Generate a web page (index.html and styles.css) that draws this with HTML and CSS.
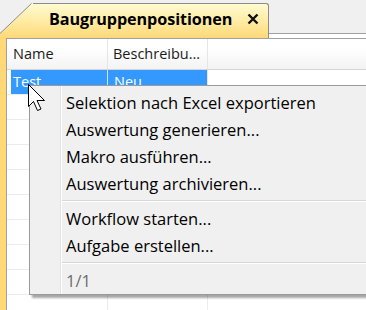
FILE: index.html
```html
<!DOCTYPE html>
<html lang="de">
<head>
<meta charset="utf-8">
<link rel="stylesheet" href="styles.css">
</head>
<body>
<div class="window">
  <div class="tabstrip">
    <svg class="tab-slant" width="33" height="35" viewBox="0 0 33 35">
      <defs>
        <linearGradient id="tg" x1="0" y1="0" x2="0" y2="1">
          <stop offset="0" stop-color="#fffbd2"/>
          <stop offset="0.55" stop-color="#ffeaa0"/>
          <stop offset="1" stop-color="#ffd878"/>
        </linearGradient>
      </defs>
      <polygon points="0,31 32,0 33,0 33,35 0,35" fill="url(#tg)"/>
      <line x1="0" y1="30.5" x2="31.5" y2="0.5" stroke="#8c8c8c" stroke-width="1"/>
    </svg>
    <div class="tab">
      <span class="tab-title">Baugruppenpositionen</span>
      <svg class="tab-close" width="12" height="12" viewBox="0 0 12 12">
        <path d="M1.5 1.5 L10.5 10.5 M10.5 1.5 L1.5 10.5" stroke="#111" stroke-width="2.4" fill="none"/>
      </svg>
    </div>
    <div class="tab-filler"></div>
  </div>
  <div class="body">
    <div class="frame-left"></div>
    <div class="grid">
      <div class="grid-head">
        <div class="cell c1">Name</div>
        <div class="cell c2">Beschreibu…</div>
        <div class="cell c3"></div>
      </div>
      <div class="row selected">
        <div class="cell c1">Test</div>
        <div class="cell c2">Neu</div>
        <div class="cell c3"></div>
      </div>
      <div class="row"><div class="cell c1"></div><div class="cell c2"></div><div class="cell c3"></div></div>
      <div class="row"><div class="cell c1"></div><div class="cell c2"></div><div class="cell c3"></div></div>
      <div class="row"><div class="cell c1"></div><div class="cell c2"></div><div class="cell c3"></div></div>
      <div class="row"><div class="cell c1"></div><div class="cell c2"></div><div class="cell c3"></div></div>
      <div class="row"><div class="cell c1"></div><div class="cell c2"></div><div class="cell c3"></div></div>
      <div class="row"><div class="cell c1"></div><div class="cell c2"></div><div class="cell c3"></div></div>
      <div class="row"><div class="cell c1"></div><div class="cell c2"></div><div class="cell c3"></div></div>
      <div class="row"><div class="cell c1"></div><div class="cell c2"></div><div class="cell c3"></div></div>
      <div class="row"><div class="cell c1"></div><div class="cell c2"></div><div class="cell c3"></div></div>
    </div>
  </div>

  <div class="menu">
    <div class="menu-item">Selektion nach Excel exportieren</div>
    <div class="menu-item">Auswertung generieren...</div>
    <div class="menu-item">Makro ausführen...</div>
    <div class="menu-item">Auswertung archivieren...</div>
    <div class="menu-sep"></div>
    <div class="menu-item">Workflow starten...</div>
    <div class="menu-item">Aufgabe erstellen...</div>
    <div class="menu-sep"></div>
    <div class="menu-item disabled">1/1</div>
  </div>

  <svg class="cursor" width="19" height="28" viewBox="0 0 19 28">
    <path d="M0.5 0.5 L0.5 22.5 L5.5 17.5 L9.5 26.5 L13 25 L9 16.5 L16.5 16.5 Z" fill="#fff" stroke="#000" stroke-width="1" stroke-linejoin="miter"/>
  </svg>
</div>
</body>
</html>
```

FILE: styles.css
```css
* { box-sizing: border-box; }

html, body {
  margin: 0;
  padding: 0;
  background: #ffffff;
}

.window {
  position: relative;
  width: 366px;
  height: 310px;
  overflow: hidden;
  font-family: "Open Sans", "Noto Sans", sans-serif;
  background: #ffffff;
}

/* ---------- tab strip ---------- */
.tabstrip {
  display: flex;
  align-items: flex-end;
  height: 38px;
  background: #f0f0f0;
}

.tab-slant {
  display: block;
  flex: none;
}

.tab {
  flex: none;
  width: 236px;
  height: 35px;
  display: flex;
  align-items: center;
  padding-left: 16px;
  padding-bottom: 4px;
  background: linear-gradient(#fffbd2 0%, #ffeaa0 55%, #ffd878 100%);
  border-top: 1px solid #8c8c8c;
  border-right: 1px solid #8c8c8c;
  border-top-right-radius: 3px;
}

.tab-title {
  font-weight: 700;
  font-size: 16.2px;
  color: #000;
  letter-spacing: -0.1px;
  white-space: nowrap;
}

.tab-close {
  margin-left: 15px;
  display: block;
  flex: none;
}

.tab-filler {
  flex: 1;
  height: 38px;
  background: linear-gradient(#f0f0f0 0 33px, #a0a0a0 33px 34px, #ffffff 34px);
}

/* ---------- body / grid ---------- */
.body {
  display: flex;
  height: 272px;
}

.frame-left {
  width: 6px;
  flex: none;
  background: #ffd878;
}

.grid {
  flex: 1;
  border-top: 1px solid #a0a0a0;
  border-left: 1px solid #a0a0a0;
  background: #fff;
}

.grid-head {
  display: flex;
  height: 31px;
  border-bottom: 1px solid #d5d5d5;
  background: linear-gradient(#ffffff 0%, #ffffff 30%, #f3f3f3 100%);
}

.grid-head .cell {
  font-size: 14.5px;
  color: #1a1a1a;
  line-height: 30px;
  padding-left: 6px;
  border-right: 1px solid #e6e6e6;
}

.grid-head .c2 {
  padding-left: 5px;
}

.cell {
  white-space: nowrap;
  overflow: hidden;
}

.c1 { width: 101px; flex: none; }
.c2 { width: 100px; flex: none; }
.c3 { flex: 1; border-right: none !important; }

.row {
  display: flex;
  height: 25px;
  border-bottom: 1px solid #ececec;
}

.row .cell {
  border-right: 1px solid #ececec;
}

.row.selected {
  padding-left: 4px;
}

.row.selected .c1 {
  width: 97px;
  background: #3399ff;
  color: #fff;
  font-size: 14.5px;
  line-height: 24px;
  padding-left: 2px;
  border-right: 1px solid #cfe6ff;
}

.row.selected .c2 {
  background: #3399ff;
  color: #fff;
  font-size: 14.5px;
  line-height: 24px;
  padding-left: 6px;
  border-right: 1px solid #e6e6e6;
}

/* ---------- context menu ---------- */
.menu {
  position: absolute;
  left: 29px;
  top: 85px;
  width: 360px;
  padding: 3px 0 0 0;
  border: 1px solid #9a9a9a;
  background:
    linear-gradient(to right, transparent 30px, #e2e2e2 30px 31px, #ffffff 31px 32px, transparent 32px),
    #f0f0f0;
  box-shadow: 3px 3px 2px rgba(0, 0, 0, 0.35);
}

.menu-item {
  height: 27px;
  line-height: 27px;
  padding-left: 36px;
  font-size: 16.5px;
  color: #000;
  white-space: nowrap;
}

.menu-item.disabled {
  color: #6d6d6d;
}

.menu-sep {
  height: 8px;
  margin-left: 32px;
  background: linear-gradient(transparent 3px, #d7d7d7 3px 4px, #ffffff 4px 5px, transparent 5px);
}

.cursor {
  position: absolute;
  left: 28px;
  top: 84px;
  display: block;
}
```
